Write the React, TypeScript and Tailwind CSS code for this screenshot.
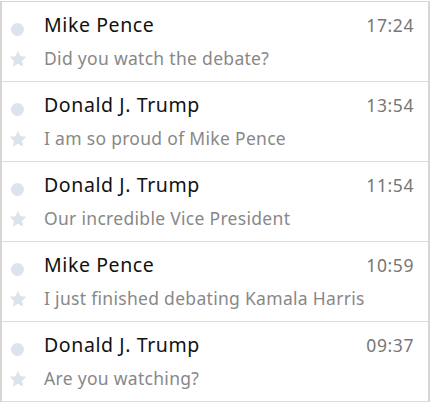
import React from "react";

const rows = [
  { name: "Mike Pence", time: "17:24", msg: "Did you watch the debate?" },
  { name: "Donald J. Trump", time: "13:54", msg: "I am so proud of Mike Pence" },
  { name: "Donald J. Trump", time: "11:54", msg: "Our incredible Vice President" },
  { name: "Mike Pence", time: "10:59", msg: "I just finished debating Kamala Harris" },
  { name: "Donald J. Trump", time: "09:37", msg: "Are you watching?" },
];

function Star() {
  return (
    <svg width="18" height="18" viewBox="0 0 24 24" className="block">
      <path
        d="M12 1l3.4 7.3 7.9.8-6 5.4 1.8 7.9L12 18.3l-7.1 4.1 1.8-7.9-6-5.4 7.9-.8z"
        fill="#dbe3ec"
      />
    </svg>
  );
}

export default function App() {
  return (
    <div
      className="w-[432px] h-[402px] bg-white overflow-hidden"
      style={{ fontFamily: '"Noto Sans", "Open Sans", sans-serif' }}
    >
      <div className="w-[430px] h-[402px] mt-px border-l-2 border-r-2 border-t border-[#d6d6d6]">
        {rows.map((r, i) => (
          <div key={i} className="h-[80px] border-b border-[#dcdcdc] flex">
            <div className="w-[31px] flex flex-col items-center">
              <div className="mt-[21px] w-[13px] h-[13px] rounded-full bg-[#dbe3ec]" />
              <div className="mt-[14px]">
                <Star />
              </div>
            </div>
            <div className="flex-1 ml-[11px] pr-[14px]">
              <div className="flex justify-between items-baseline mt-[9px] leading-[28px]">
                <span className="text-[19.5px] tracking-[0.6px] text-[#111]">{r.name}</span>
                <span className="text-[17.5px] tracking-[0.6px] text-[#777]">{r.time}</span>
              </div>
              <div className="text-[17.5px] tracking-[0.3px] text-[#888] mt-[6px] leading-[26px]">{r.msg}</div>
            </div>
          </div>
        ))}
      </div>
    </div>
  );
}
